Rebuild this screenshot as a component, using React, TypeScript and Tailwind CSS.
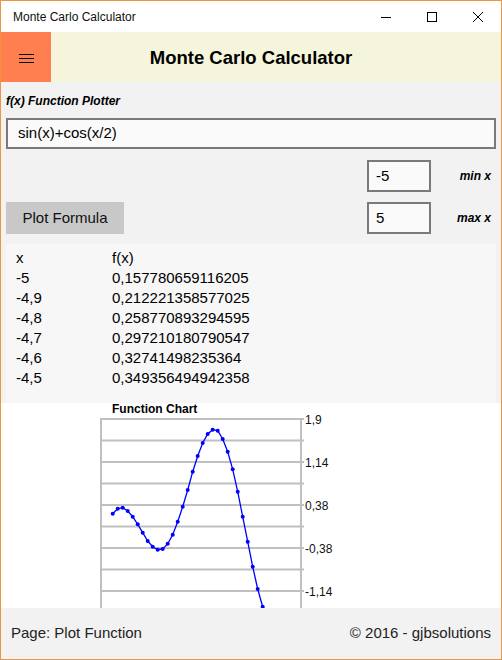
import React from "react";

const rows: [string, string][] = [
  ["-5", "0,157780659116205"],
  ["-4,9", "0,212221358577025"],
  ["-4,8", "0,258770893294595"],
  ["-4,7", "0,297210180790547"],
  ["-4,6", "0,32741498235364"],
  ["-4,5", "0,349356494942358"],
];

// sampled dot positions of the plotted series (chart coords)
const dots: [number, number][] = [
  [111.7, 110.7], [116.7, 105.7], [121.7, 104.7], [126.7, 108], [131.7, 113.7],
  [136.7, 121.3], [141.7, 129.7], [146.7, 138], [151.7, 143.7], [156.7, 146.7],
  [161.7, 146], [166.7, 140.7], [171.7, 131.7], [176.7, 118.7], [181.7, 103.7],
  [186.7, 87], [191.7, 68.7], [196.7, 53], [201.7, 40], [206.7, 31],
  [211.7, 26.7], [216.7, 27.7], [221.7, 36], [226.7, 48.7], [231.7, 66.3],
  [236.7, 88.7], [241.7, 113.7], [246.7, 138.7], [251.7, 163.7], [256.7, 186],
  [261.7, 203.7], [266.7, 220],
];

const gridY = [16, 37.5, 59, 80.5, 102, 123.5, 145, 166.5, 188];
const labels: [string, number][] = [
  ["1,9", 16],
  ["1,14", 59],
  ["0,38", 102],
  ["-0,38", 145],
  ["-1,14", 188],
];

function FunctionChart() {
  return (
    <svg width="500" height="205" viewBox="0 0 500 205" className="block">
      <text x="111" y="9.5" fontSize="12" fontWeight="bold" fill="#000" fontFamily="'Liberation Sans', Arial, sans-serif">
        Function Chart
      </text>
      {gridY.map((y) => (
        <line key={y} x1="99" x2="303" y1={y} y2={y} stroke="#c0c0c0" strokeWidth="2" />
      ))}
      <line x1="100" x2="100" y1="15" y2="205" stroke="#c0c0c0" strokeWidth="2" />
      <line x1="300" x2="300" y1="15" y2="205" stroke="#c0c0c0" strokeWidth="2" />
      {labels.map(([t, y]) => (
        <text key={t} x="304" y={y + 4.5} fontSize="12" fill="#111" fontFamily="'Liberation Sans', Arial, sans-serif">
          {t}
        </text>
      ))}
      <polyline
        points={dots.map(([x, y]) => `${x},${y}`).join(" ")}
        fill="none"
        stroke="#0000ff"
        strokeWidth="1.3"
      />
      {dots.map(([x, y], i) => (
        <circle key={i} cx={x} cy={y} r="2" fill="#0000ff" />
      ))}
    </svg>
  );
}

export default function App() {
  return (
    <div className="w-[502px] h-[660px] border border-[#ee9543] bg-[#f2f2f2] flex flex-col overflow-hidden font-['Liberation_Sans',Arial,sans-serif] text-black">
      {/* window title bar */}
      <div className="h-[31px] shrink-0 bg-white flex items-center">
        <span className="pl-3 text-[12px] text-[#111]">Monte Carlo Calculator</span>
        <div className="ml-auto flex h-full">
          <div className="w-[46px] flex items-center justify-center">
            <svg width="10" height="10" viewBox="0 0 10 10">
              <line x1="0" x2="10" y1="5.5" y2="5.5" stroke="#000" strokeWidth="1" />
            </svg>
          </div>
          <div className="w-[46px] flex items-center justify-center">
            <svg width="10" height="10" viewBox="0 0 10 10">
              <rect x="0.5" y="0.5" width="9" height="9" fill="none" stroke="#000" strokeWidth="1" />
            </svg>
          </div>
          <div className="w-[46px] flex items-center justify-center">
            <svg width="10" height="10" viewBox="0 0 10 10">
              <path d="M0 0L10 10M10 0L0 10" stroke="#000" strokeWidth="1" />
            </svg>
          </div>
        </div>
      </div>

      {/* app header */}
      <div className="h-[50px] shrink-0 grid grid-cols-[50px_1fr_50px] bg-[#f5f5dc]">
        <div className="bg-[#ff7f50] flex flex-col items-center justify-center gap-[3px] pt-[2px]">
          <span className="block h-px w-[15px] bg-black" />
          <span className="block h-px w-[15px] bg-black" />
          <span className="block h-px w-[15px] bg-black" />
        </div>
        <h1 className="flex items-center justify-center text-[18.5px] font-bold pt-px">
          Monte Carlo Calculator
        </h1>
      </div>

      {/* plotter form */}
      <div className="px-[5px] pt-[11px] shrink-0">
        <div className="h-[16px] leading-[16px] text-[12px] font-bold italic">f(x) Function Plotter</div>
        <div className="mt-[9px] h-[31px] border-2 border-[#7a7a7a] bg-[#fafafa] flex items-center pl-[10px] text-[15px]">
          sin(x)+cos(x/2)
        </div>
        <div className="mt-[11px] h-[32px] flex items-center">
          <div className="ml-auto w-[64px] h-full border-2 border-[#7a7a7a] bg-[#fafafa] flex items-center pl-[7px] text-[15px]">
            -5
          </div>
          <span className="w-[65px] pr-[5px] text-right text-[12px] font-bold italic">min x</span>
        </div>
        <div className="mt-[10px] h-[32px] flex items-center">
          <button className="w-[118px] h-full bg-[#c8c8c8] text-[15px] text-[#111]">Plot Formula</button>
          <div className="ml-auto w-[64px] h-full border-2 border-[#7a7a7a] bg-[#fafafa] flex items-center pl-[7px] text-[15px]">
            5
          </div>
          <span className="w-[65px] pr-[5px] text-right text-[12px] font-bold italic">max x</span>
        </div>
        <div className="mt-[10px] h-[159px] bg-[#f7f7f7] pt-[4px] pl-[10px] text-[15px] leading-[20px]">
          <div className="grid grid-cols-[96px_1fr]">
            <span>x</span>
            <span>f(x)</span>
            {rows.map(([x, fx]) => (
              <React.Fragment key={x}>
                <span>{x}</span>
                <span>{fx}</span>
              </React.Fragment>
            ))}
          </div>
        </div>
      </div>

      {/* chart */}
      <div className="h-[205px] shrink-0 bg-white overflow-hidden">
        <FunctionChart />
      </div>

      {/* footer */}
      <div className="flex-1 flex items-center justify-between px-[10px] text-[15px] text-[#222]">
        <span>Page: Plot Function</span>
        <span>© 2016 - gjbsolutions</span>
      </div>
    </div>
  );
}
